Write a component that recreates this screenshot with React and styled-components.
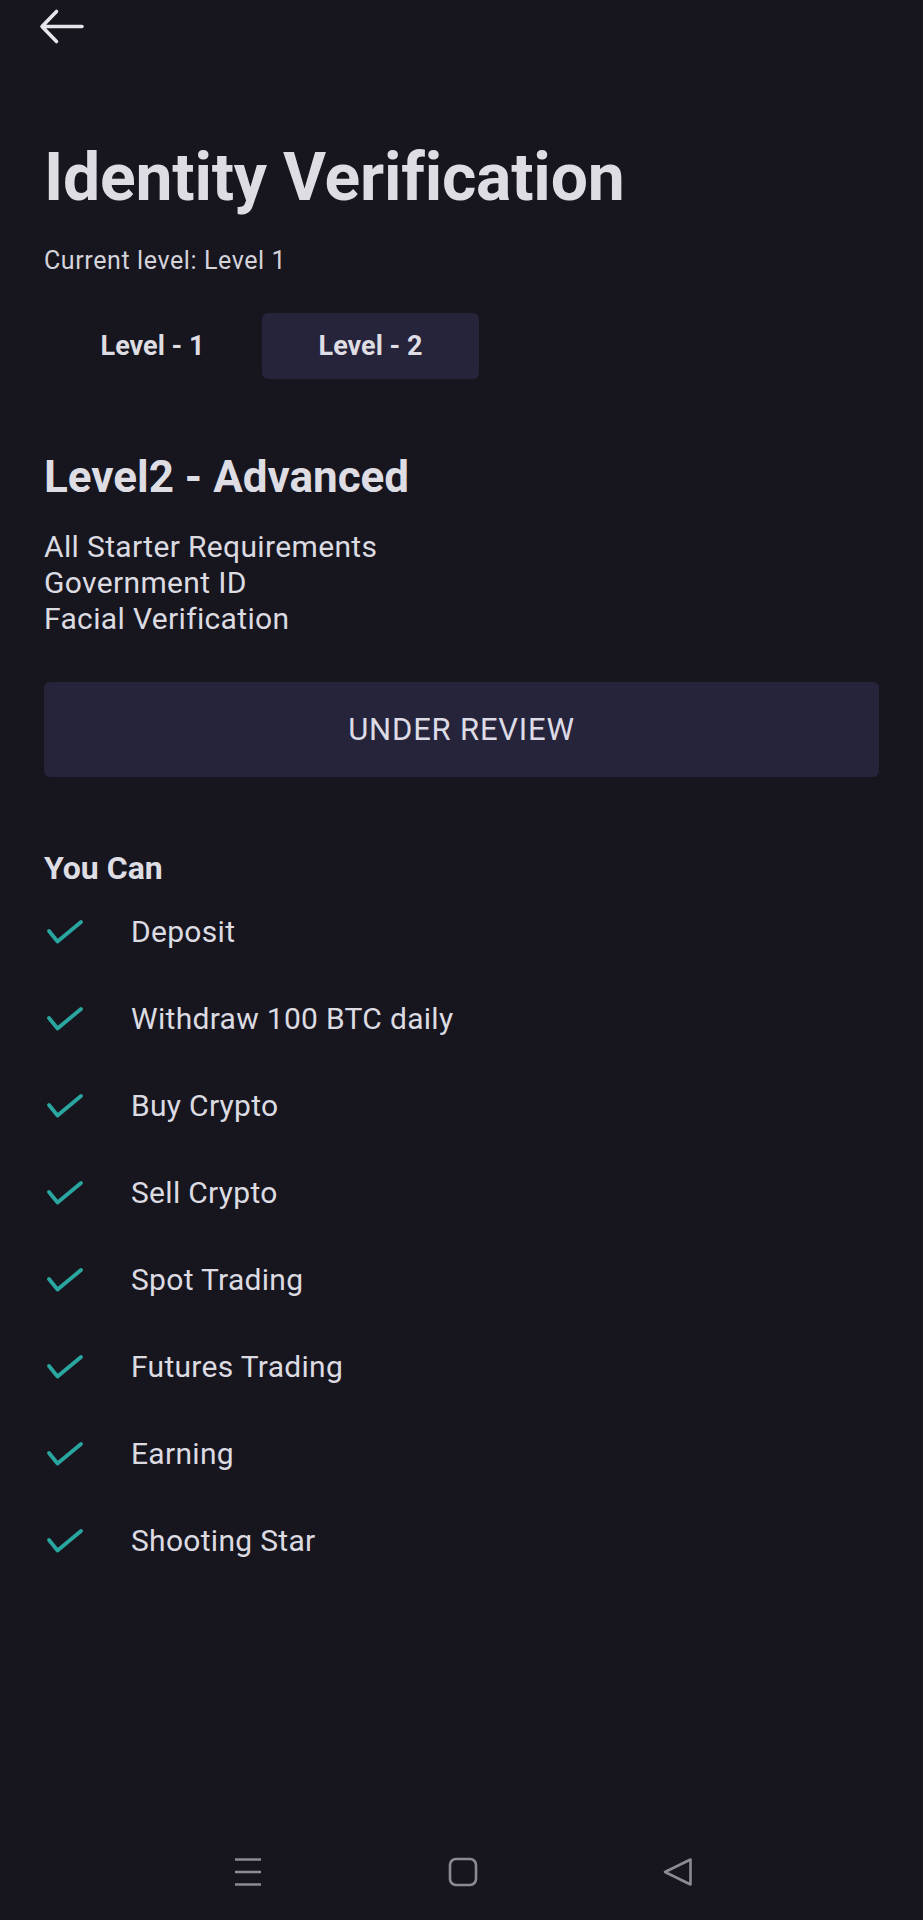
import React from "react";
import styled, { createGlobalStyle } from "styled-components";

const Global = createGlobalStyle`
  html, body { margin: 0; padding: 0; background: #17161f; }
  body { font-family: Roboto, "Noto Sans", "Liberation Sans", sans-serif; color: #e1e0e6; }
  * { box-sizing: border-box; }
`;

const Screen = styled.div`
  min-height: 1920px;
  display: flex;
  flex-direction: column;
  background: #17161f;
`;

const Header = styled.header`
  height: 54px;
  padding: 8px 0 0 39px;
`;

const Content = styled.main`
  padding: 0 44px;
  display: flex;
  flex-direction: column;
`;

const Title = styled.h1`
  margin: 84px 0 0;
  font-size: 66px;
  line-height: 80px;
  font-weight: 700;
  color: #dedde3;
  letter-spacing: -0.2px;
`;

const Subtitle = styled.p`
  margin: 28px 0 0;
  font-size: 25px;
  line-height: 30px;
  letter-spacing: 0.6px;
  color: #d4d3da;
`;

const Tabs = styled.div`
  margin-top: 37px;
  display: flex;
  gap: 1px;
`;

const Tab = styled.button`
  width: 217px;
  height: 66px;
  border: none;
  border-radius: 6px;
  background: ${(p) => (p.$active ? "#26243a" : "transparent")};
  color: #dedde3;
  font-family: inherit;
  font-size: 27px;
  font-weight: 700;
  padding: 0;
`;

const SectionTitle = styled.h2`
  margin: 72px 0 0;
  font-size: 44px;
  line-height: 52px;
  font-weight: 700;
  color: #dedde3;
`;

const Requirements = styled.div`
  margin-top: 26px;
  display: flex;
  flex-direction: column;
`;

const Requirement = styled.span`
  font-size: 30px;
  line-height: 36px;
  letter-spacing: 0.35px;
  color: #dcdbe2;
`;

const StatusButton = styled.div`
  margin-top: 45px;
  height: 95px;
  border-radius: 6px;
  background: #26243a;
  display: flex;
  align-items: center;
  justify-content: center;
  font-size: 31px;
  letter-spacing: 0.8px;
  color: #dcdbe6;
`;

const ListTitle = styled.h3`
  margin: 73px 0 0;
  font-size: 32px;
  line-height: 36px;
  font-weight: 700;
  color: #dedde3;
`;

const List = styled.ul`
  list-style: none;
  margin: 2px 0 0;
  padding: 0;
`;

const Item = styled.li`
  height: 87px;
  display: flex;
  align-items: center;
  gap: 47px;
  font-size: 30px;
  letter-spacing: 0.3px;
  color: #dcdbe2;
`;

const CheckIcon = styled.svg`
  flex: none;
  margin-left: 2px;
`;

const NavBar = styled.nav`
  margin-top: auto;
  height: 96px;
  display: flex;
  align-items: center;
  padding-left: 233px;
  gap: 185px;
`;

const NavIcon = styled.svg`
  flex: none;
`;

const features = [
  "Deposit",
  "Withdraw 100 BTC daily",
  "Buy Crypto",
  "Sell Crypto",
  "Spot Trading",
  "Futures Trading",
  "Earning",
  "Shooting Star",
];

const Check = () => (
  <CheckIcon width="38" height="26" viewBox="0 0 38 26">
    <path
      d="M3 12 L11.5 22.5 L35 3"
      fill="none"
      stroke="#2aa6a0"
      strokeWidth="3.8"
      strokeLinecap="round"
      strokeLinejoin="round"
    />
  </CheckIcon>
);

export default function App() {
  return (
    <>
      <Global />
      <Screen>
        <Header>
          <svg width="48" height="38" viewBox="0 0 48 38">
            <path
              d="M3 18.5 H43 M17.5 3.5 L3 18.5 L17.5 33.5"
              fill="none"
              stroke="#e6e5ea"
              strokeWidth="3.6"
              strokeLinecap="round"
              strokeLinejoin="round"
            />
          </svg>
        </Header>
        <Content>
          <Title>Identity Verification</Title>
          <Subtitle>Current level: Level 1</Subtitle>
          <Tabs>
            <Tab>Level - 1</Tab>
            <Tab $active>Level - 2</Tab>
          </Tabs>
          <SectionTitle>Level2 - Advanced</SectionTitle>
          <Requirements>
            <Requirement>All Starter Requirements</Requirement>
            <Requirement>Government ID</Requirement>
            <Requirement>Facial Verification</Requirement>
          </Requirements>
          <StatusButton>UNDER REVIEW</StatusButton>
          <ListTitle>You Can</ListTitle>
          <List>
            {features.map((f) => (
              <Item key={f}>
                <Check />
                {f}
              </Item>
            ))}
          </List>
        </Content>
        <NavBar>
          <NavIcon width="30" height="30" viewBox="0 0 30 30">
            <path
              d="M2 2.5 H28 M2 15 H28 M2 27.5 H28"
              stroke="#8c8b93"
              strokeWidth="2.6"
              fill="none"
            />
          </NavIcon>
          <NavIcon width="30" height="30" viewBox="0 0 30 30">
            <rect x="2" y="2" width="26" height="26" rx="6" stroke="#8c8b93" strokeWidth="2.6" fill="none" />
          </NavIcon>
          <NavIcon width="30" height="30" viewBox="0 0 30 30">
            <path
              d="M27.5 2.5 L2 15 L27.5 27.5 Z"
              stroke="#8c8b93"
              strokeWidth="2.6"
              strokeLinejoin="round"
              fill="none"
            />
          </NavIcon>
        </NavBar>
      </Screen>
    </>
  );
}
